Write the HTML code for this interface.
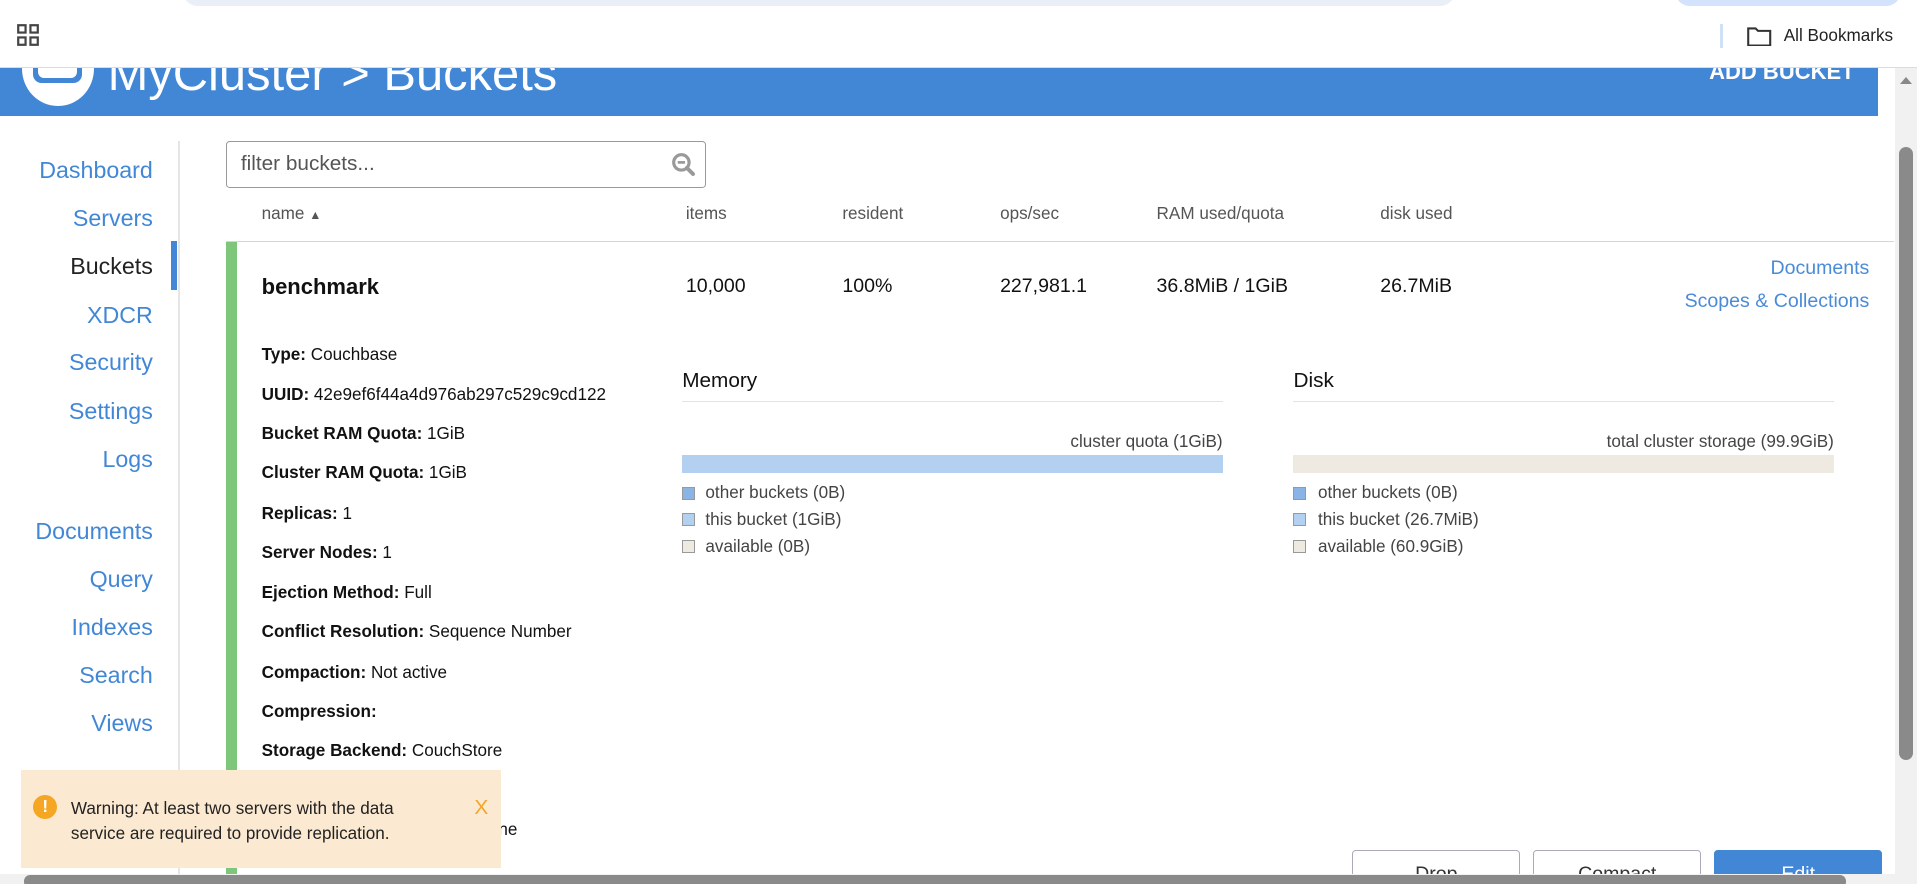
<!DOCTYPE html>
<html><head><meta charset="utf-8"><style>
html,body{margin:0;padding:0;width:1917px;height:884px;overflow:hidden;background:#fff;font-family:"Liberation Sans",sans-serif}
#w{position:absolute;left:0;top:0;width:1568px;height:723px;zoom:1.22258;overflow:hidden;background:#fff}
.a{position:absolute;white-space:nowrap}
.nav{position:absolute;right:1443px;font-size:19px;color:#4287d6;line-height:24px}
.h{font-size:14px;color:#555;top:167px}
.r{font-size:16px;color:#111;top:225px}
.d{left:214px;font-size:14px;color:#111}
.d b{font-weight:bold}
.lg{font-size:14px;color:#444}
.sq{position:absolute;width:9px;height:9px;border:1px solid #999}
.btn{position:absolute;top:695px;height:40px;width:136px;border:1px solid #aab;border-radius:3px;background:#fff;font-size:16px;color:#333;text-align:center;line-height:38px}
</style></head><body><div id="w">
<div class="a" style="left:150px;top:-20px;width:1040px;height:25px;background:#e9eef7;border-radius:14px"></div>
<div class="a" style="left:1370px;top:-20px;width:185px;height:25px;background:#d3e3fd;border-radius:14px"></div>
<svg class="a" style="left:14px;top:20px" width="18" height="18" viewBox="0 0 18 18" fill="none" stroke="#444" stroke-width="1.8"><rect x="1" y="1" width="6" height="6"/><rect x="11" y="1" width="6" height="6"/><rect x="1" y="11" width="6" height="6"/><rect x="11" y="11" width="6" height="6"/></svg>
<div class="a" style="left:1407px;top:20px;width:2px;height:19px;background:#cfe0f7"></div>
<svg class="a" style="left:1429px;top:21px" width="20" height="17" viewBox="0 0 20 17" fill="none" stroke="#333" stroke-width="1.7"><path d="M1 2h6l2 2h10v12H1z"/></svg>
<div class="a" style="left:1459px;top:21px;font-size:14px;color:#222">All Bookmarks</div>
<div class="a" style="left:0;top:55px;width:1568px;height:1px;background:#dcdcdc"></div>
<div class="a" style="left:0;top:56px;width:1536px;height:39px;background:#4287d6;overflow:hidden">
 <div class="a" style="left:18px;top:-31px;width:59px;height:62px;border-radius:50%;background:#fff"></div>
 <div class="a" style="left:27px;top:-20px;width:40px;height:32px;border-radius:7px;background:#4287d6"></div>
 <div class="a" style="left:31px;top:-16px;width:32px;height:24px;border-radius:5px;background:#fff"></div>
 <div class="a" style="left:88px;top:-20px;font-size:40px;color:#fff;line-height:50px">MyCluster &gt; Buckets</div>
 <div class="a" style="left:1398px;top:-8px;font-size:18px;font-weight:bold;color:#fff;line-height:22px">ADD BUCKET</div>
</div>
<div class="a" style="left:1550px;top:56px;width:18px;height:667px;background:#f1f1f1"></div>
<div class="a" style="left:1554px;top:63px;width:0;height:0;border-left:5px solid transparent;border-right:5px solid transparent;border-bottom:6px solid #888"></div>
<div class="a" style="left:1553px;top:120px;width:12px;height:502px;border-radius:6px;background:#8a8a8a"></div>
<div class="a" style="left:146px;top:115px;width:1px;height:608px;background:#e5e5e5"></div>
<div class="a" style="left:140px;top:197px;width:5px;height:40px;background:#4287d6"></div>
<div class="nav" style="top:128px">Dashboard</div>
<div class="nav" style="top:167px">Servers</div>
<div class="nav" style="top:206px;color:#222">Buckets</div>
<div class="nav" style="top:246px">XDCR</div>
<div class="nav" style="top:285px">Security</div>
<div class="nav" style="top:325px">Settings</div>
<div class="nav" style="top:364px">Logs</div>
<div class="nav" style="top:423px">Documents</div>
<div class="nav" style="top:462px">Query</div>
<div class="nav" style="top:501px">Indexes</div>
<div class="nav" style="top:541px">Search</div>
<div class="nav" style="top:580px">Views</div>
<div class="a" style="left:185px;top:115px;width:391px;height:37px;border:1px solid #999;border-radius:3px"></div>
<div class="a" style="left:197px;top:124px;font-size:17px;color:#555">filter buckets...</div>
<svg class="a" style="left:549px;top:124px" width="20" height="20" viewBox="0 0 20 20"><circle cx="8.5" cy="8.5" r="6.3" fill="none" stroke="#999" stroke-width="2.6"/><path d="M5.5 8.5h6" stroke="#999" stroke-width="2.2"/><path d="M13 13l5 5" stroke="#999" stroke-width="3.2" stroke-linecap="round"/></svg>
<div class="a h" style="left:214px">name <span style="font-size:10px">▲</span></div>
<div class="a h" style="left:561px">items</div>
<div class="a h" style="left:689px">resident</div>
<div class="a h" style="left:818px">ops/sec</div>
<div class="a h" style="left:946px">RAM used/quota</div>
<div class="a h" style="left:1129px">disk used</div>
<div class="a" style="left:185px;top:197px;width:1364px;height:1px;background:#d5d5d5"></div>
<div class="a" style="left:185px;top:198px;width:9px;height:525px;background:#7dc67a"></div>
<div class="a" style="left:214px;top:224px;font-size:18px;font-weight:bold;color:#111">benchmark</div>
<div class="a r" style="left:561px">10,000</div>
<div class="a r" style="left:689px">100%</div>
<div class="a r" style="left:818px">227,981.1</div>
<div class="a r" style="left:946px">36.8MiB / 1GiB</div>
<div class="a r" style="left:1129px">26.7MiB</div>
<div class="a" style="right:39px;top:210px;font-size:16px;color:#4a8bd8">Documents</div>
<div class="a" style="right:39px;top:237px;font-size:16px;color:#4a8bd8">Scopes &amp; Collections</div>
<div class="a d" style="top:282px"><b>Type:</b> Couchbase</div>
<div class="a d" style="top:315px"><b>UUID:</b> 42e9ef6f44a4d976ab297c529c9cd122</div>
<div class="a d" style="top:347px"><b>Bucket RAM Quota:</b> 1GiB</div>
<div class="a d" style="top:379px"><b>Cluster RAM Quota:</b> 1GiB</div>
<div class="a d" style="top:412px"><b>Replicas:</b> 1</div>
<div class="a d" style="top:444px"><b>Server Nodes:</b> 1</div>
<div class="a d" style="top:477px"><b>Ejection Method:</b> Full</div>
<div class="a d" style="top:509px"><b>Conflict Resolution:</b> Sequence Number</div>
<div class="a d" style="top:542px"><b>Compaction:</b> Not active</div>
<div class="a d" style="top:574px"><b>Compression:</b></div>
<div class="a d" style="top:606px"><b>Storage Backend:</b> CouchStore</div>
<div class="a d" style="top:671px"><b>Durability Minimum Level:</b> none</div>
<div class="a" style="left:558px;top:302px;font-size:17px;color:#111">Memory</div>
<div class="a" style="left:558px;top:328px;width:442px;height:1px;background:#e3e3e3"></div>
<div class="a lg" style="right:568px;top:353px">cluster quota (1GiB)</div>
<div class="a" style="left:558px;top:372px;width:442px;height:15px;background:#b3d0f0"></div>
<div class="sq" style="left:558px;top:398px;background:#8ab4e6"></div><div class="a lg" style="left:577px;top:395px">other buckets (0B)</div>
<div class="sq" style="left:558px;top:420px;background:#b3d0f0"></div><div class="a lg" style="left:577px;top:417px">this bucket (1GiB)</div>
<div class="sq" style="left:558px;top:442px;background:#eeeae2"></div><div class="a lg" style="left:577px;top:439px">available (0B)</div>
<div class="a" style="left:1058px;top:302px;font-size:17px;color:#111">Disk</div>
<div class="a" style="left:1058px;top:328px;width:442px;height:1px;background:#e3e3e3"></div>
<div class="a lg" style="right:68px;top:353px">total cluster storage (99.9GiB)</div>
<div class="a" style="left:1058px;top:372px;width:442px;height:15px;background:#eeeae2"></div>
<div class="sq" style="left:1058px;top:398px;background:#8ab4e6"></div><div class="a lg" style="left:1078px;top:395px">other buckets (0B)</div>
<div class="sq" style="left:1058px;top:420px;background:#b3d0f0"></div><div class="a lg" style="left:1078px;top:417px">this bucket (26.7MiB)</div>
<div class="sq" style="left:1058px;top:442px;background:#eeeae2"></div><div class="a lg" style="left:1078px;top:439px">available (60.9GiB)</div>
<div class="btn" style="left:1106px">Drop</div>
<div class="btn" style="left:1254px">Compact</div>
<div class="btn" style="left:1402px;background:#4287d6;border-color:#4287d6;color:#fff">Edit</div>
<div class="a" style="left:0;top:715px;width:1550px;height:8px;background:#f1f1f1"></div>
<div class="a" style="left:20px;top:716px;width:1490px;height:10px;border-radius:5px;background:#8a8a8a"></div>
<div class="a" style="left:17px;top:630px;width:393px;height:80px;background:#fbe9d1"></div>
<div class="a" style="left:27px;top:650px;width:20px;height:20px;border-radius:50%;background:#f5a623;color:#fff;font-weight:bold;font-size:14px;text-align:center;line-height:20px">!</div>
<div class="a" style="left:58px;top:652px;font-size:14px;color:#222;line-height:20px">Warning: At least two servers with the data<br>service are required to provide replication.</div>
<div class="a" style="left:388px;top:651px;font-size:17px;color:#f5a623">X</div>
</div></body></html>
